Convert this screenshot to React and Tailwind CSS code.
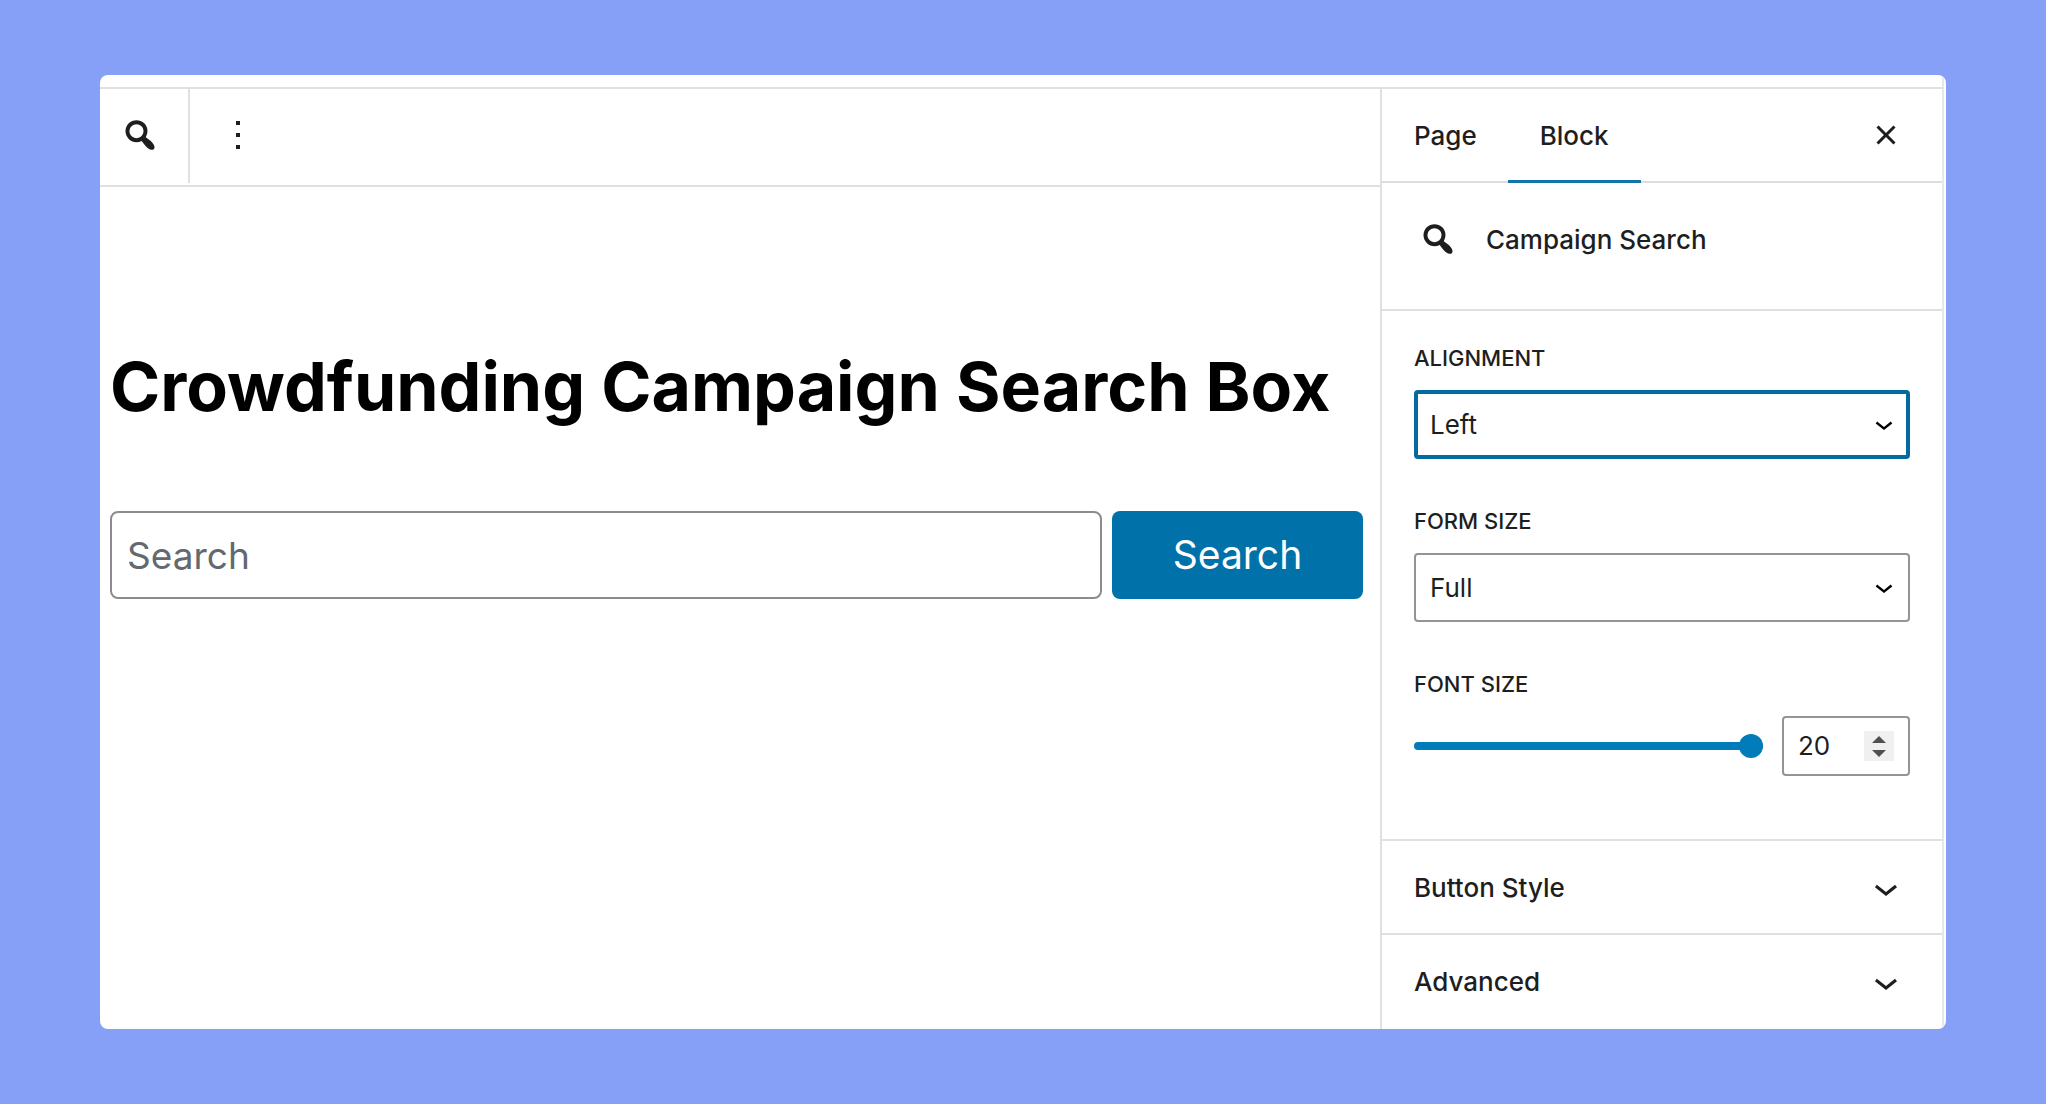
import { useState } from "react";

function SearchIcon() {
  return (
    <svg viewBox="0 0 20 20" className="size-10 shrink-0" fill="currentColor" aria-hidden="true">
      <path d="M12.14 4.18c1.87 1.87 2.11 4.75.72 6.89.12.1.22.21.36.31.2.16.47.36.81.59.34.24.56.39.66.47.42.31.73.57.94.78.32.32.6.65.84 1 .25.35.44.69.59 1.04.14.35.21.68.18 1-.02.32-.14.59-.36.81s-.49.34-.81.36c-.31.02-.65-.04-.99-.19-.35-.14-.7-.34-1.04-.59-.35-.24-.68-.52-1-.84-.21-.21-.47-.52-.77-.93-.1-.13-.25-.35-.47-.66-.22-.32-.4-.57-.56-.78-.16-.2-.29-.35-.44-.5-2.07 1.09-4.69.76-6.44-.98-2.14-2.15-2.14-5.64 0-7.78 2.15-2.15 5.63-2.15 7.78 0zm-1.41 6.36c1.36-1.37 1.36-3.58 0-4.95-1.37-1.37-3.59-1.37-4.95 0-1.37 1.37-1.37 3.58 0 4.95 1.36 1.37 3.58 1.37 4.95 0z" />
    </svg>
  );
}

function ChevronDown({ className }) {
  return (
    <svg viewBox="0 0 24 24" className={className} fill="currentColor" aria-hidden="true">
      <path d="M17.5 11.6L12 16l-5.5-4.4.9-1.2L12 14l4.5-3.6 1 1.2z" />
    </svg>
  );
}

function SelectField({ id, label, options, focused }) {
  return (
    <div className="flex flex-col gap-[18px]">
      <label htmlFor={id} className="text-[22px] leading-7 font-medium uppercase">
        {label}
      </label>
      <div className="relative">
        <select
          id={id}
          className={
            focused
              ? "block h-[69px] w-full appearance-none rounded-sm border-4 border-[#036a9f] bg-white pr-12 pl-3 text-[26px] leading-8 outline-none"
              : "block h-[69px] w-full appearance-none rounded-sm border-2 border-[#949494] bg-white pr-12 pl-3.5 text-[26px] leading-8 outline-none"
          }
        >
          {options.map((option) => (
            <option key={option}>{option}</option>
          ))}
        </select>
        <ChevronDown className="pointer-events-none absolute top-4 right-2 size-9 text-black" />
      </div>
    </div>
  );
}

function CollapsedPanel({ title }) {
  return (
    <button
      type="button"
      className="flex h-[94px] w-full items-center justify-between border-t-2 border-[#e0e0e0] px-8 pt-0.5 text-left text-[26px] leading-8 font-medium"
    >
      {title}
      <ChevronDown className="size-12" />
    </button>
  );
}

export default function App() {
  const [size, setSize] = useState(20);
  const step = (amount) => setSize((value) => Math.min(20, Math.max(10, Number(value) + amount)));

  return (
    <div className="flex min-h-screen bg-[#86a0f8] px-[100px] py-[75px] font-['Inter',sans-serif] text-[#1e1e1e]">
      <div className="flex flex-1 overflow-hidden rounded-lg bg-white pr-0.5">
        <div className="flex min-w-0 flex-1 flex-col border-r-2 border-[#e8e8e8] pt-3">
          <div className="flex flex-1 border-t-2 border-[#e0e0e0]">
            <main className="flex min-w-0 flex-1 flex-col">
              <div className="flex h-[98px] items-start border-b-2 border-[#e0e0e0]">
                <button
                  type="button"
                  aria-label="Campaign Search"
                  className="flex h-[94px] w-[90px] items-center border-r-2 border-[#e0e0e0] pb-0.5 pl-5"
                >
                  <SearchIcon />
                </button>
                <button type="button" aria-label="Options" className="flex h-[94px] items-center px-6 pb-0.5">
                  <svg viewBox="0 0 24 24" className="size-12" fill="currentColor" aria-hidden="true">
                    <path d="M13 19h-2v-2h2v2zm0-6h-2v-2h2v2zm0-6h-2V5h2v2z" />
                  </svg>
                </button>
              </div>
              <div className="flex flex-col gap-20 pt-[154px] pr-[17px] pl-2.5">
                <h1 className="text-[68px] leading-[90px] font-bold whitespace-nowrap text-black">
                  Crowdfunding Campaign Search Box
                </h1>
                <form className="flex gap-2.5" onSubmit={(event) => event.preventDefault()}>
                  <input
                    type="search"
                    aria-label="Search"
                    placeholder="Search"
                    className="h-[88px] min-w-0 flex-1 rounded-lg border-2 border-[#8c8c90] bg-white px-[15px] text-[37px] leading-[48px] outline-none placeholder:text-[#646970]"
                  />
                  <button
                    type="submit"
                    className="h-[88px] w-[251px] rounded-lg bg-[#0071a9] text-[39px] leading-[48px] text-white"
                  >
                    Search
                  </button>
                </form>
              </div>
            </main>

            <aside className="flex w-[562px] shrink-0 flex-col border-l-2 border-[#e0e0e0] pb-0.5">
              <div className="flex h-[94px] border-b-2 border-[#dddddd] pr-8">
                <button type="button" className="pt-0.5 pr-[31px] pl-8 text-[26px] leading-8 font-medium">
                  Page
                </button>
                <button
                  type="button"
                  className="-mb-0.5 border-b-3 border-[#1275a8] px-8 pt-[3px] text-[26px] leading-8 font-medium"
                >
                  Block
                </button>
                <button type="button" aria-label="Close" className="ml-auto">
                  <svg viewBox="0 0 24 24" className="size-12" fill="currentColor" aria-hidden="true">
                    <path d="M12 13.06l3.712 3.713 1.061-1.06L13.061 12l3.712-3.712-1.06-1.06L12 10.938 8.288 7.227l-1.061 1.06L10.939 12l-3.712 3.712 1.06 1.061L12 13.061z" />
                  </svg>
                </button>
              </div>

              <div className="flex h-[126px] items-start gap-7 px-9 pt-9">
                <SearchIcon />
                <h2 className="text-[26px] leading-[42px] font-medium">Campaign Search</h2>
              </div>

              <div className="flex flex-1 flex-col gap-12 border-t-2 border-[#e0e0e0] px-8 pt-[33px] pb-15">
                <SelectField id="alignment" label="Alignment" options={["Left", "Center", "Right"]} focused />
                <SelectField id="form-size" label="Form size" options={["Full", "Medium", "Small"]} />
                <div className="flex flex-col gap-[18px]">
                  <label htmlFor="font-size" className="text-[22px] leading-7 font-medium uppercase">
                    Font size
                  </label>
                  <div className="flex items-center gap-[19px]">
                    <input
                      id="font-size"
                      type="range"
                      min="10"
                      max="20"
                      value={size}
                      onChange={(event) => setSize(event.target.value)}
                      className="h-6 min-w-0 flex-1 appearance-none bg-transparent [&::-webkit-slider-runnable-track]:h-2 [&::-webkit-slider-runnable-track]:rounded-full [&::-webkit-slider-runnable-track]:bg-[#007cba] [&::-webkit-slider-thumb]:-mt-2 [&::-webkit-slider-thumb]:size-6 [&::-webkit-slider-thumb]:appearance-none [&::-webkit-slider-thumb]:rounded-full [&::-webkit-slider-thumb]:bg-[#007cba]"
                    />
                    <div className="flex h-[60px] w-32 items-center justify-between rounded-sm border-2 border-[#949494] px-3.5">
                      <input
                        type="number"
                        aria-label="Font size value"
                        value={size}
                        onChange={(event) => setSize(event.target.value)}
                        className="w-12 appearance-none bg-transparent text-[26px] leading-8 outline-none [-moz-appearance:textfield] [&::-webkit-inner-spin-button]:appearance-none"
                      />
                      <div className="flex h-[30px] w-[30px] flex-col bg-[#f0f0f0] text-[#505050]">
                        <button
                          type="button"
                          aria-label="Increase"
                          className="flex flex-1 items-end justify-center pb-[3px]"
                          onClick={() => step(1)}
                        >
                          <svg viewBox="0 0 14 7" className="h-[7px] w-3.5" fill="currentColor" aria-hidden="true">
                            <path d="M7 0l7 7H0z" />
                          </svg>
                        </button>
                        <button
                          type="button"
                          aria-label="Decrease"
                          className="flex flex-1 items-start justify-center pt-1"
                          onClick={() => step(-1)}
                        >
                          <svg viewBox="0 0 14 7" className="h-[7px] w-3.5" fill="currentColor" aria-hidden="true">
                            <path d="M7 7L0 0h14z" />
                          </svg>
                        </button>
                      </div>
                    </div>
                  </div>
                </div>
              </div>

              <CollapsedPanel title="Button Style" />
              <CollapsedPanel title="Advanced" />
            </aside>
          </div>
        </div>
      </div>
    </div>
  );
}
